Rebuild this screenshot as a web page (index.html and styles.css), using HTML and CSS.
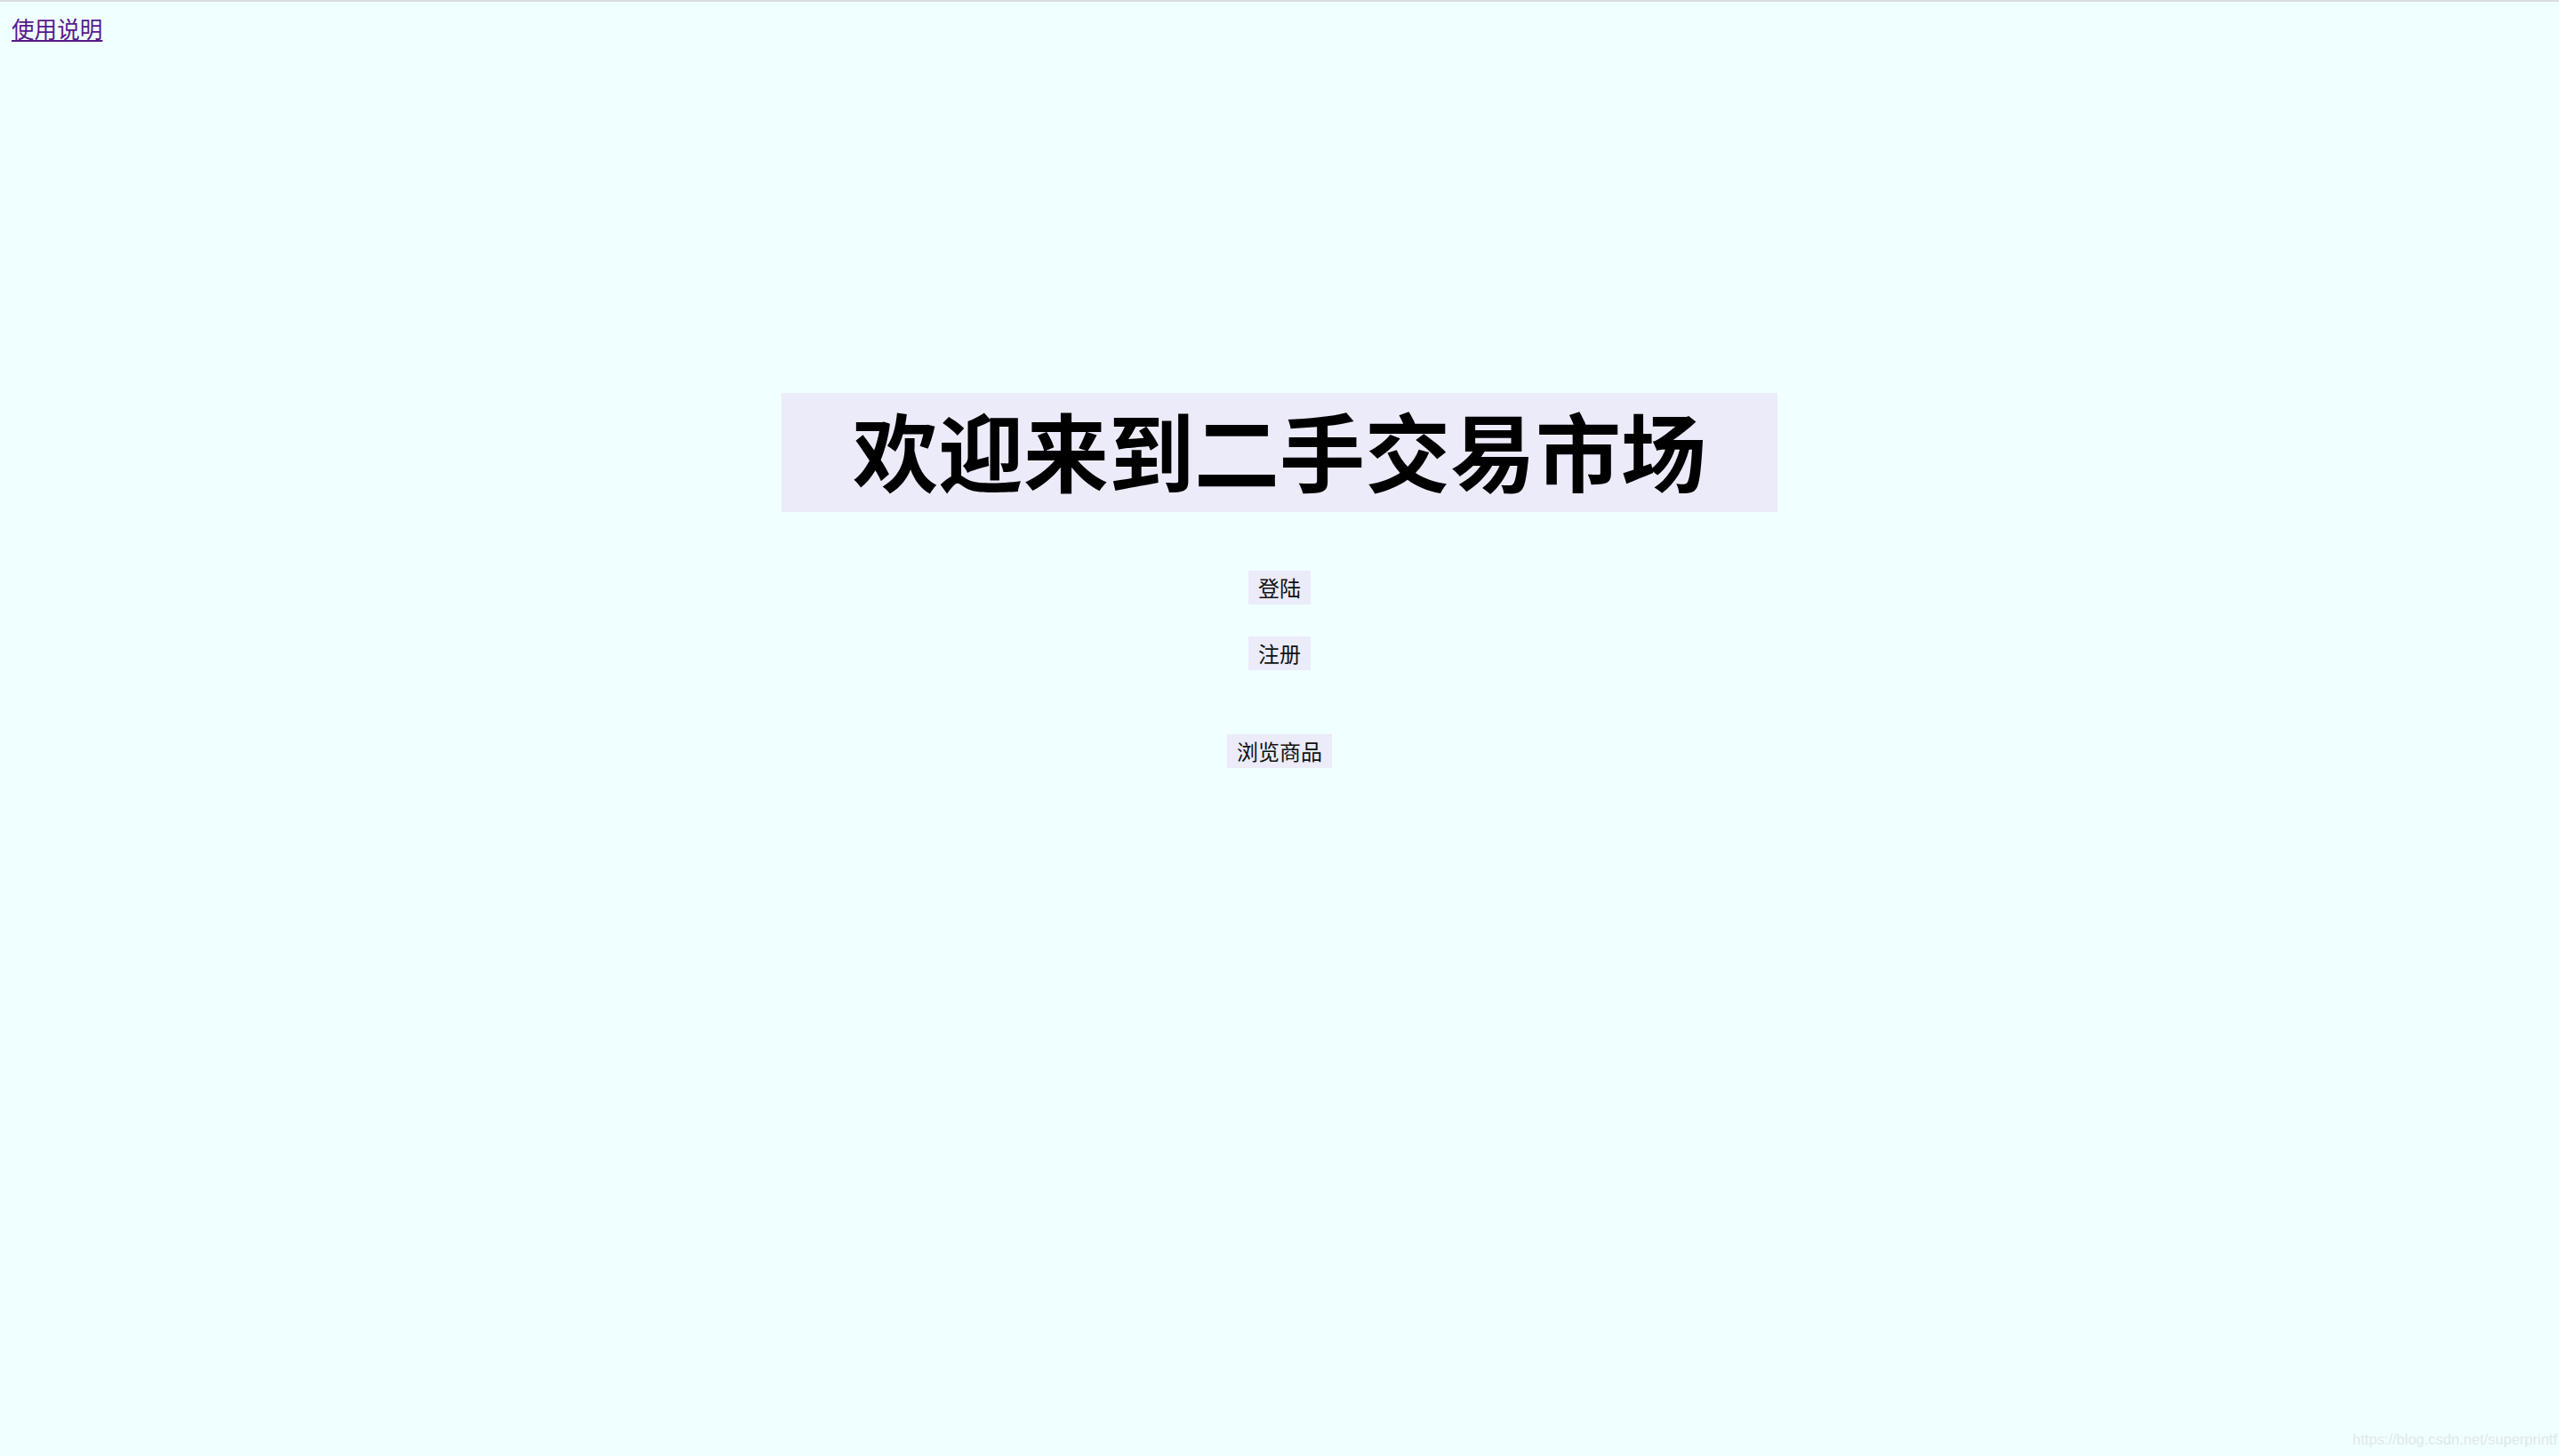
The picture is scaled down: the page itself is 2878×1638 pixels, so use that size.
FILE: index.html
```html
<!DOCTYPE html>
<html lang="zh-CN">
<head>
<meta charset="utf-8">
<title>二手交易市场</title>
<link rel="stylesheet" href="styles.css">
</head>
<body>
<div class="topbar"><a class="help" href="#">使用说明</a></div>
<main class="hero">
  <h1 class="title">欢迎来到二手交易市场</h1>
  <div class="actions">
    <button class="btn">登陆</button>
    <button class="btn btn-gap">注册</button>
    <button class="btn btn-far">浏览商品</button>
  </div>
</main>
<div class="watermark">https://blog.csdn.net/superprintf</div>
</body>
</html>
```
FILE: styles.css
```css
html, body {
  height: 100%;
}
body {
  margin: 0;
  background: #f0ffff;
  border-top: 2px solid #dadde0;
  box-sizing: border-box;
  font-family: "Noto Sans CJK SC", "Noto Sans", sans-serif;
  overflow: hidden;
}
.topbar {
  padding: 14px 13px 0;
  height: 40px;
}
.help {
  font-size: 25.6px;
  line-height: 32px;
  color: #551a8b;
  text-decoration: underline;
  text-underline-offset: 2px;
}
.hero {
  display: flex;
  flex-direction: column;
  align-items: center;
  padding-top: 386px;
}
.title {
  margin: 0;
  width: 1120px;
  height: 134px;
  box-sizing: border-box;
  padding-bottom: 10px;
  background: #ebebfa;
  display: flex;
  align-items: center;
  justify-content: center;
  font-size: 96px;
  font-weight: 700;
  letter-spacing: 0;
  color: #000;
}
.actions {
  display: flex;
  flex-direction: column;
  align-items: center;
  margin-top: 66px;
}
.btn {
  border: 0;
  margin: 0;
  background: #ebebfa;
  color: #111;
  font-family: "Noto Sans CJK SC", "Noto Sans", sans-serif;
  font-size: 24px;
  height: 38px;
  line-height: 38px;
  padding: 0 11px;
  cursor: pointer;
}
.btn-gap {
  margin-top: 36px;
}
.btn-far {
  margin-top: 72px;
}
.watermark {
  position: absolute;
  right: 2px;
  bottom: 9px;
  font-family: "Liberation Sans", Arial, sans-serif;
  font-size: 16.5px;
  color: #dfe8e8;
}
```
